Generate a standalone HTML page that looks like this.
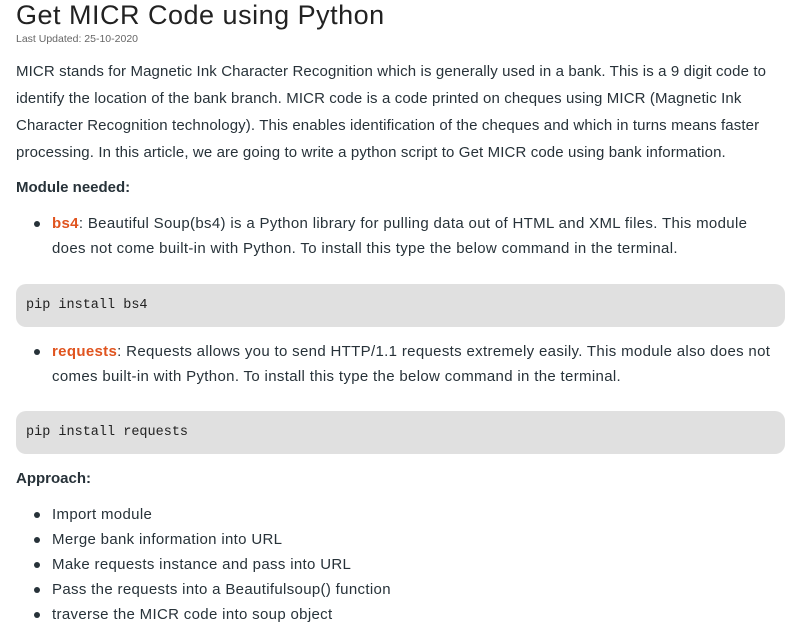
<!DOCTYPE html>
<html><head><meta charset="utf-8"><style>
body{margin:0;width:809px;height:642px;background:#fff;overflow:hidden;font-family:"Liberation Sans",sans-serif;color:#273239;position:relative}
.a{position:absolute;left:16px;white-space:nowrap}
.t{font-size:27px;top:0px;color:#222;letter-spacing:0.5px}
.d{font-size:10.5px;top:33px;color:#666}
.p{font-size:15px;line-height:27px;letter-spacing:0.12px}
.b{font-weight:bold;font-size:15px}
.o{color:#e0541f;font-weight:bold}
.li{position:absolute;left:52px;font-size:15px;line-height:25px;white-space:nowrap;letter-spacing:0.33px}
.dot{position:absolute;left:34px;width:6px;height:6px;border-radius:50%;background:#273239}
.code{position:absolute;left:16px;width:769px;height:43px;background:#e0e0e0;border-radius:10px;font-family:"Liberation Mono",monospace;font-size:13.5px;line-height:43px;text-indent:10px;color:#222}
</style></head><body>
<div class="a t">Get MICR Code using Python</div>
<div class="a d">Last Updated: 25-10-2020</div>
<div class="a p" style="top:58px">MICR stands for Magnetic Ink Character Recognition which is generally used in a bank. This is a 9 digit code to<br>identify the location of the bank branch. MICR code is a code printed on cheques using MICR (Magnetic Ink<br>Character Recognition technology). This enables identification of the cheques and which in turns means faster<br>processing. In this article, we are going to write a python script to Get MICR code using bank information.</div>
<div class="a b" style="top:179px">Module needed:</div>
<div class="dot" style="top:221px"></div>
<div class="li" style="top:211px"><span class="o">bs4</span>: Beautiful Soup(bs4) is a Python library for pulling data out of HTML and XML files. This module<br>does not come built-in with Python. To install this type the below command in the terminal.</div>
<div class="code" style="top:284px">pip install bs4</div>
<div class="dot" style="top:349px"></div>
<div class="li" style="top:339px"><span class="o">requests</span>: Requests allows you to send HTTP/1.1 requests extremely easily. This module also does not<br>comes built-in with Python. To install this type the below command in the terminal.</div>
<div class="code" style="top:411px">pip install requests</div>
<div class="a b" style="top:470px">Approach:</div>
<div class="dot" style="top:512px"></div><div class="dot" style="top:537px"></div><div class="dot" style="top:562px"></div><div class="dot" style="top:587px"></div><div class="dot" style="top:612px"></div>
<div class="li" style="top:502px">Import module<br>Merge bank information into URL<br>Make requests instance and pass into URL<br>Pass the requests into a Beautifulsoup() function<br>traverse the MICR code into soup object</div>
</body></html>
